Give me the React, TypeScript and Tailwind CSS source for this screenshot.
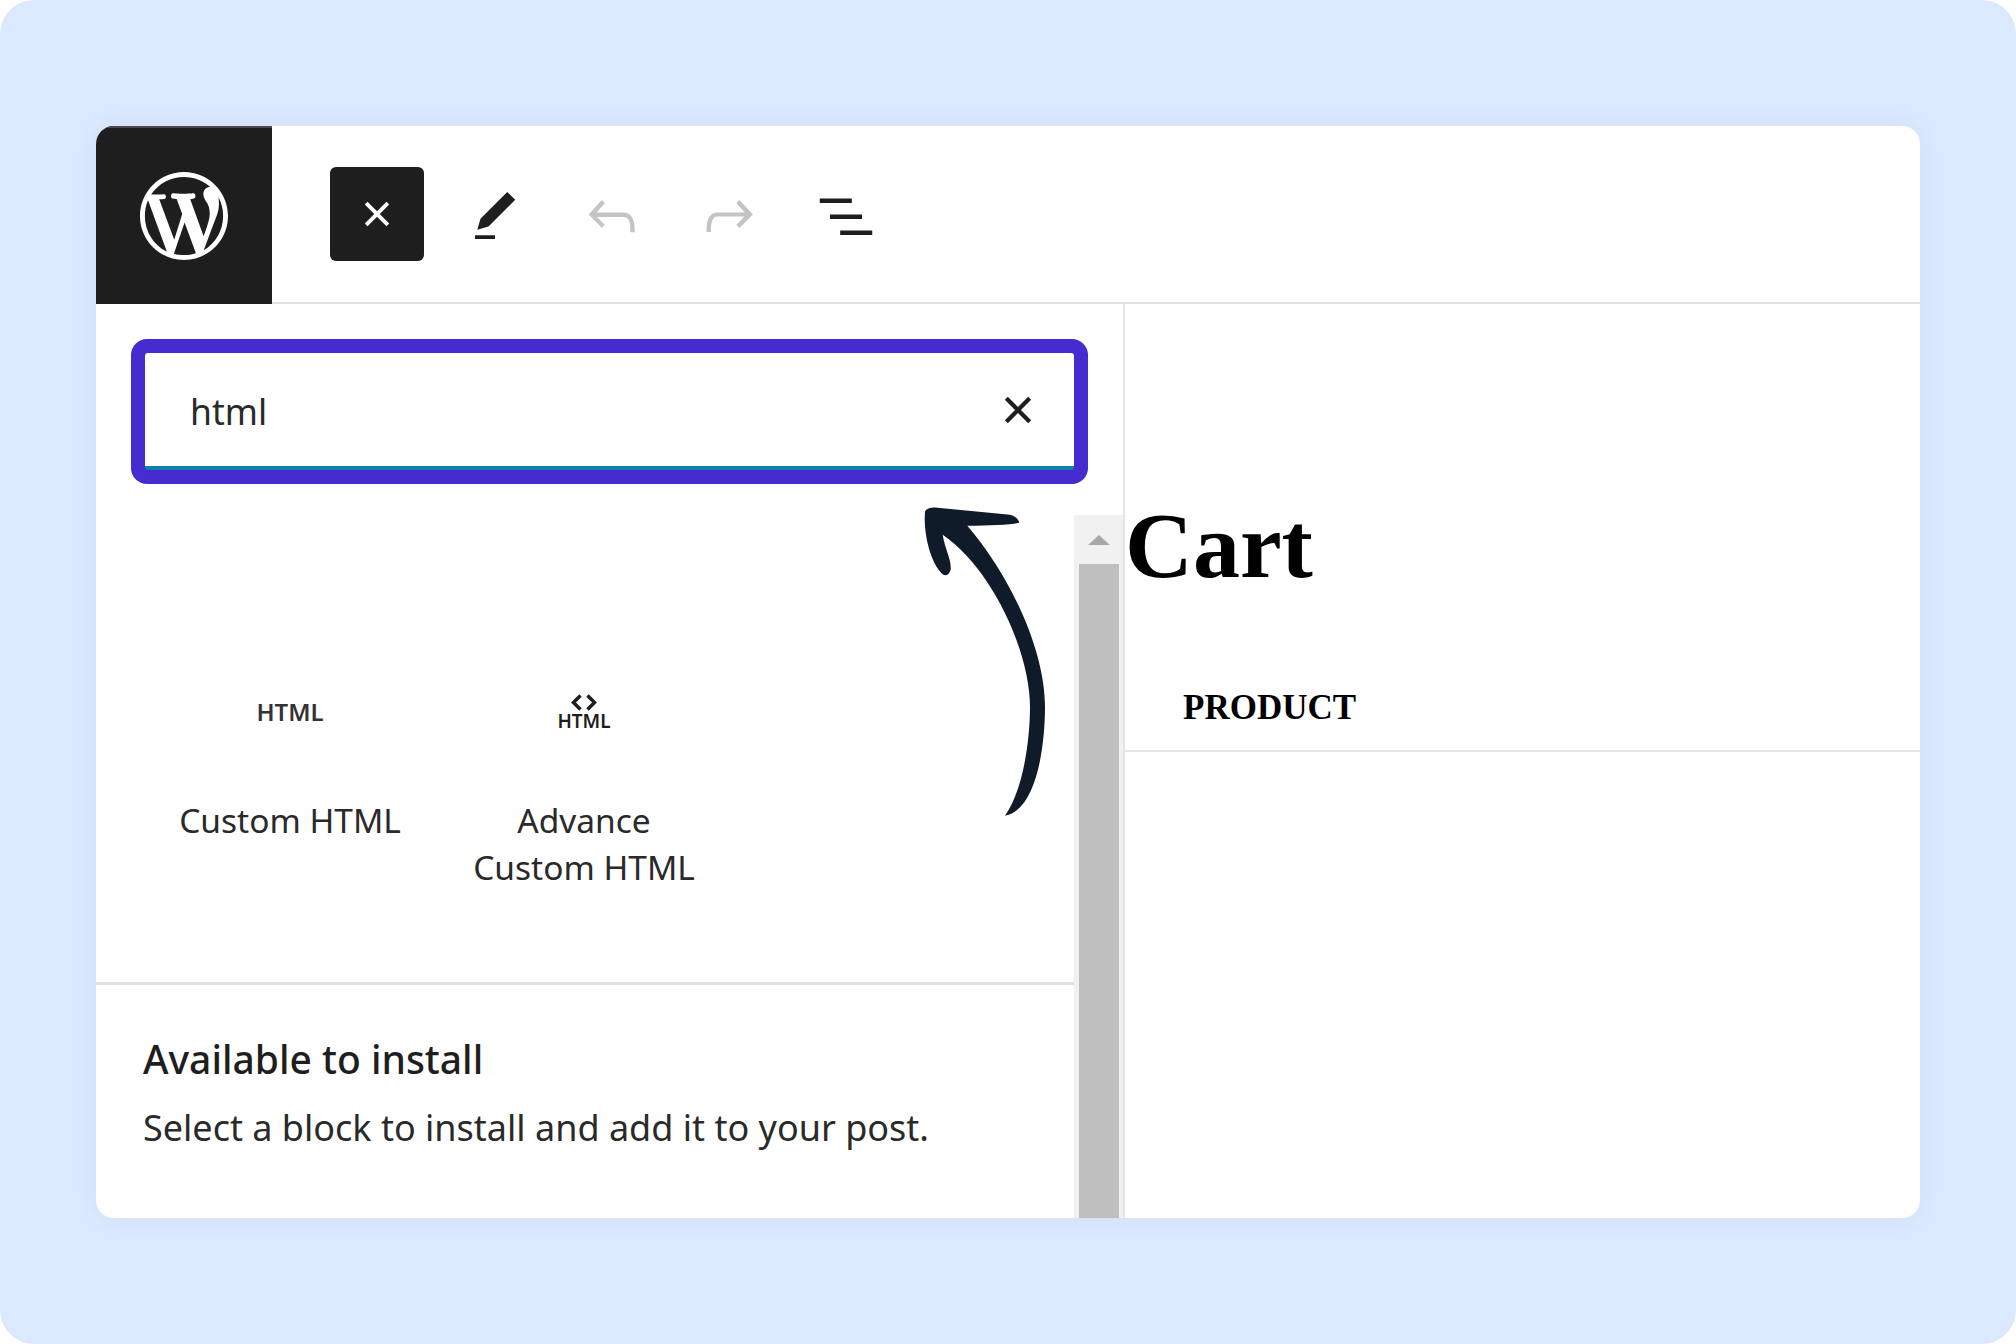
import React from 'react';

const uiFont = "font-['Noto_Sans',sans-serif]";
const serifFont = "font-['Liberation_Serif',serif]";

const WpLogo = () => (
  <svg viewBox="0 0 20 20" className="h-[88px] w-[88px]" fill="currentColor">
    <path d="M20 10c0-5.51-4.49-10-10-10C4.48 0 0 4.49 0 10c0 5.52 4.48 10 10 10 5.51 0 10-4.48 10-10zM7.78 15.37L4.37 6.22c.55-.02 1.17-.08 1.17-.08.5-.06.44-1.13-.06-1.11 0 0-1.45.11-2.37.11-.18 0-.37 0-.58-.01C4.12 2.69 6.87 1.11 10 1.11c2.33 0 4.45.87 6.05 2.34-.68-.11-1.65.39-1.65 1.58 0 .74.45 1.36.9 2.1.35.61.55 1.36.55 2.46 0 1.49-1.4 5-1.4 5l-3.03-8.37c.54-.02.82-.17.82-.17.5-.05.44-1.25-.06-1.22 0 0-1.44.12-2.38.12-.87 0-2.33-.12-2.33-.12-.5-.03-.56 1.2-.06 1.22l.92.08 1.26 3.41zM17.41 10c.24-.64.74-1.87.43-4.25.7 1.29 1.05 2.71 1.05 4.25 0 3.29-1.73 6.24-4.4 7.78.97-2.59 1.94-5.2 2.92-7.78zM6.1 18.09C3.12 16.65 1.11 13.53 1.11 10c0-1.3.23-2.48.72-3.59C3.25 10.3 4.67 14.2 6.1 18.09zm4.03-6.63l2.58 6.98c-.86.29-1.76.45-2.71.45-.79 0-1.57-.11-2.29-.33.81-2.38 1.62-4.74 2.42-7.1z" />
  </svg>
);

const CloseIcon = ({ className }: { className: string }) => (
  <svg viewBox="0 0 24 24" className={className} fill="none" stroke="currentColor" strokeWidth="3.6">
    <path d="M2 2 22 22M22 2 2 22" />
  </svg>
);

const EditIcon = () => (
  <svg viewBox="0 0 24 24" className="mt-[2px] h-[60px] w-[60px] text-[#1e1e1e]" fill="currentColor">
    <path d="M20.1 5.1L16.9 2 6.2 12.7l-1.3 4.4 4.5-1.3L20.1 5.1zM4 20.8h8v-1.5H4v1.5z" />
  </svg>
);

const UndoIcon = () => (
  <svg viewBox="0 0 24 24" className="h-[70px] w-[70px] text-[#c4c4c4]" fill="currentColor">
    <path d="M18.3 11.7c-.6-.6-1.4-.9-2.3-.9H6.7l2.9-3.3-1.1-1-4.5 5L8.5 16l1-1-2.7-2.7H16c.5 0 .9.2 1.3.5 1 1 1 3.4 1 4.5v.3h1.5v-.2c0-1.5 0-4.3-1.5-5.7z" />
  </svg>
);

const RedoIcon = () => (
  <svg viewBox="0 0 24 24" className="h-[70px] w-[70px] text-[#c4c4c4]" fill="currentColor">
    <path d="M15.6 6.5l-1.1 1 2.9 3.3H8c-.9 0-1.7.3-2.3.9-1.4 1.5-1.4 4.2-1.4 5.6v.2h1.5v-.3c0-1.1 0-3.5 1-4.5.3-.3.7-.5 1.3-.5h9.2L14.5 15l1.1 1.1 4.6-4.6-4.6-5z" />
  </svg>
);

const ListIcon = () => (
  <svg viewBox="0 0 24 24" className="h-[70px] w-[70px] text-[#1e1e1e]" fill="currentColor">
    <path d="M3 6h11v1.5H3V6zm3.5 5.5h11V13h-11v-1.5zM21 17H10v1.5h11V17z" />
  </svg>
);

const BigArrow = () => (
  <svg
    viewBox="120 70 390 950"
    className="pointer-events-none absolute left-[824px] top-[377px] h-[317px] w-[130px] text-[#0f1b28]"
    fill="currentColor"
  >
    <path d="M135 95C140 85 155 82 165 83L390 105C405 108 415 118 418 128C395 136 330 136 262 138C400 300 495 520 495 680C495 800 470 990 375 1008C430 930 450 780 450 680C450 520 340 270 188 165C195 210 215 240 212 270C205 292 190 290 180 275C150 240 130 160 135 95Z" />
  </svg>
);

const App = () => {
  return (
    <div className={`h-[1344px] w-[2016px] overflow-hidden bg-white ${uiFont}`}>
      <div className="h-full w-full rounded-[34px] bg-[#dbe9fe] pl-[96px] pt-[126px]">
        <div className="relative flex h-[1092px] w-[1824px] flex-col overflow-hidden rounded-[18px] bg-white shadow-[0_0_24px_rgba(30,60,120,0.05)]">
          <header className="flex h-[178px] shrink-0 border-b-[2px] border-[#e2e2e2]">
            <div className="-mb-[2px] flex h-[178px] w-[176px] items-center justify-center border-t-[2px] border-[#4a4a4a] bg-[#1e1e1e] text-white">
              <WpLogo />
            </div>
            <div className="ml-[58px] flex items-center pt-[3px]">
              <div className="mb-[4px] flex h-[94px] w-[94px] items-center justify-center rounded-[6px] bg-[#1e1e1e] text-white">
                <CloseIcon className="h-[26px] w-[26px]" />
              </div>
              <div className="ml-[26px] flex w-[90px] justify-center"><EditIcon /></div>
              <div className="ml-[27px] flex w-[90px] justify-center"><UndoIcon /></div>
              <div className="ml-[27px] flex w-[90px] justify-center"><RedoIcon /></div>
              <div className="ml-[27px] flex w-[90px] justify-center"><ListIcon /></div>
            </div>
          </header>

          <div className="flex min-h-0 flex-1">
            <aside className="flex w-[1029px] shrink-0 flex-col border-r-[2px] border-[#e4e4e4]">
              <div className="ml-[35px] mt-[35px] flex h-[145px] w-[957px] shrink-0 rounded-[16px] bg-[#462cd0] p-[14px]">
                <div className="flex flex-1 items-center justify-between rounded-[3px] border-b-[4px] border-[#0f7fb0] bg-white pl-[45px] pr-[42px]">
                  <span className="pt-[4px] text-[35.5px] font-normal leading-none text-[#2a2a2a]">html</span>
                  <CloseIcon className="h-[28px] w-[28px] text-[#1e1e1e]" />
                </div>
              </div>

              <div className="mt-[31px] flex min-h-0 flex-1">
                <div className="flex w-[978px] shrink-0 flex-col">
                  <div className="flex h-[470px] shrink-0 border-b-[3px] border-[#e0e0e0] pl-[74px] pt-[167px]">
                    <div className="flex w-[240px] flex-col items-center">
                      <div className="flex h-[60px] items-center text-[24px] font-semibold leading-none text-[#333]">HTML</div>
                      <div className="mt-[55px] whitespace-nowrap text-center text-[33.5px] font-normal leading-[47px] text-[#2a2a2a]">Custom HTML</div>
                    </div>
                    <div className="ml-[54px] flex w-[240px] flex-col items-center">
                      <div className="flex h-[60px] flex-col items-center justify-center text-[#1e1e1e]">
                        <svg viewBox="0 0 24 14" className="mb-[1px] h-[17px] w-[28px]" fill="none" stroke="currentColor" strokeWidth="3">
                          <path d="M9 1 3 7l6 6M15 1l6 6-6 6" />
                        </svg>
                        <span className="text-[19px] font-semibold leading-[18px]">HTML</span>
                      </div>
                      <div className="mt-[55px] whitespace-nowrap text-center text-[33.5px] font-normal leading-[47px] text-[#2a2a2a]">Advance<br />Custom HTML</div>
                    </div>
                  </div>
                  <div className="pl-[47px] pt-[49px]">
                    <h2 className="text-[39px] font-medium leading-[50px] text-[#1e1e1e]">Available to install</h2>
                    <p className="mt-[22px] whitespace-nowrap text-[36px] font-normal leading-[44px] text-[#2a2a2a]">Select a block to install and add it to your post.</p>
                  </div>
                </div>
                <div className="flex w-[49px] flex-col items-center bg-[#f1f1f1]">
                  <div className="flex h-[49px] w-full items-center justify-center">
                    <div className="h-0 w-0 border-x-[11px] border-b-[10px] border-x-transparent border-b-[#a8a8a8]" />
                  </div>
                  <div className="w-[40px] flex-1 bg-[#bfbfbf]" />
                </div>
              </div>
            </aside>

            <section className={`min-w-0 flex-1 text-black ${serifFont}`}>
              <h1 className="mt-[191px] text-[94px] font-bold leading-[100px]">Cart</h1>
              <div className="mt-[93px] border-b-[2px] border-[#e6e6e6] pb-[22px] pl-[58px] text-[35px] font-bold leading-[40px]">PRODUCT</div>
            </section>
          </div>

          <BigArrow />
        </div>
      </div>
    </div>
  );
};

export default App;
